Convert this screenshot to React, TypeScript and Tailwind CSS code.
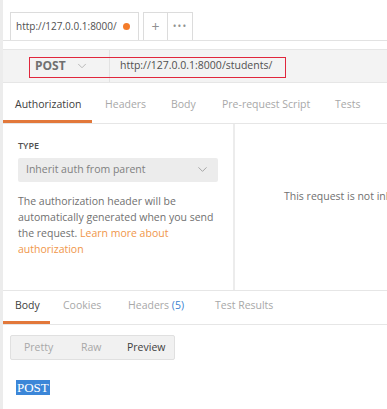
import { ChevronDown } from "lucide-react";

const font = { fontFamily: '"Open Sans", "Noto Sans", sans-serif' };

export default function App() {
  return (
    <div
      className="relative w-[387px] h-[409px] overflow-hidden bg-white text-[#505050] border-l-[3px] border-[#ececec]"
      style={font}
    >
      {/* tab strip */}
      <div className="flex items-end h-[41px] pl-[7px] border-b border-[#e2e2e2] bg-white">
        <div className="flex items-center justify-between w-[129px] h-[28px] pl-[5px] pr-[8px] border border-b-0 border-[#dcdcdc] bg-white">
          <span className="text-[10px] text-[#505050] whitespace-nowrap">http://127.0.0.1:8000/</span>
          <span className="w-[7px] h-[7px] rounded-full bg-[#f47c2a]" />
        </div>
        <div className="flex items-center justify-center w-[25px] h-[28px] ml-[4px] border border-b-0 border-[#dcdcdc] text-[14px] text-[#909090]">
          +
        </div>
        <div className="flex items-center justify-center w-[25px] h-[28px] border border-b-0 border-l-0 border-[#dcdcdc] text-[10px] tracking-[1px] text-[#909090]">
          •••
        </div>
      </div>

      {/* request url */}
      <div className="pt-[8px] pb-[7px]">
        <div className="relative flex items-center h-[34px] bg-[#f3f3f3] border-y border-[#e6e6e6]">
          <div className="flex items-center w-[107px] h-full pl-[32px] border-r border-[#e2e2e2]">
            <span className="text-[12px] font-bold text-[#707070]">POST</span>
            <ChevronDown className="ml-[9px] w-[14px] h-[14px] text-[#b0b0b0]" strokeWidth={1.5} />
          </div>
          <span className="pl-[10px] text-[10.5px] text-[#505050] whitespace-nowrap">http://127.0.0.1:8000/students/</span>
          {/* red highlight annotation */}
          <div className="absolute left-[27px] top-[8px] w-[255px] h-[19px] outline outline-1 outline-[#e0263c]" />
        </div>
      </div>

      {/* request tabs */}
      <div className="flex items-end h-[34px] border-b border-[#e6e6e6] text-[10.5px] whitespace-nowrap">
        <div className="flex flex-col w-[92px] -ml-[3px]">
          <span className="pl-[15px] pb-[7px] text-[#404040]">Authorization</span>
          <div className="h-[3px] bg-[#e2783a]" />
        </div>
        <span className="w-[66px] ml-[13px] pb-[10px] text-[#a8a8a8]">Headers</span>
        <span className="w-[51px] pb-[10px] text-[#a8a8a8]">Body</span>
        <span className="w-[113px] pb-[10px] text-[#a8a8a8]">Pre-request Script</span>
        <span className="pb-[10px] text-[#a8a8a8]">Tests</span>
      </div>

      {/* auth panel */}
      <div className="flex h-[167px] border-b border-[#e6e6e6]">
        <div className="w-[232px] shrink-0 pl-[15px] pr-[15px] pt-[15px] border-r-2 border-[#ececec]">
          <div className="text-[9px] font-semibold text-[#505050]">TYPE</div>
          <div className="flex items-center justify-between h-[24px] mt-[5px] px-[8px] bg-[#ececec] rounded-[2px]">
            <span className="text-[10.5px] text-[#808080]">Inherit auth from parent</span>
            <ChevronDown className="w-[15px] h-[15px] text-[#a0a0a0]" strokeWidth={1.5} />
          </div>
          <p className="mt-[11px] text-[10.5px] leading-[16px] text-[#707070]">
            The authorization header will be automatically generated when you send the request.{" "}
            <span className="text-[#f0964a]">Learn more about authorization</span>
          </p>
        </div>
        <div className="flex-1 pl-[49px] pt-[58px]">
          <span className="text-[10.5px] text-[#707070] whitespace-nowrap">This request is not inheriting any authorization</span>
        </div>
      </div>

      {/* response tabs */}
      <div className="flex items-end h-[34px] border-b border-[#e6e6e6] text-[10.5px] whitespace-nowrap">
        <div className="flex flex-col w-[50px] -ml-[3px]">
          <span className="pl-[15px] pb-[7px] text-[#404040]">Body</span>
          <div className="h-[3px] bg-[#e2783a]" />
        </div>
        <span className="w-[65px] ml-[13px] pb-[10px] text-[#a8a8a8]">Cookies</span>
        <span className="w-[87px] pb-[10px] text-[#a8a8a8]">
          Headers <span className="text-[#3a7fd0]">(5)</span>
        </span>
        <span className="pb-[10px] text-[#a8a8a8]">Test Results</span>
      </div>

      {/* preview */}
      <div className="pl-[7px] pt-[10px]">
        <div className="flex items-center w-[165px] h-[25px] bg-[#f1f1f1] border border-[#e0e0e0] rounded-[2px] text-[10.5px]">
          <span className="w-[70px] pl-[13px] text-[#a8a8a8]">Pretty</span>
          <span className="w-[46px] text-[#a8a8a8]">Raw</span>
          <span className="text-[#404040]">Preview</span>
        </div>
        <div className="mt-[14px] ml-[6px]">
          <span
            className="px-[1px] text-[13px] leading-[15px] text-white bg-[#3b86d8]"
            style={{ fontFamily: '"Liberation Serif", serif' }}
          >
            POST
          </span>
        </div>
      </div>
    </div>
  );
}
